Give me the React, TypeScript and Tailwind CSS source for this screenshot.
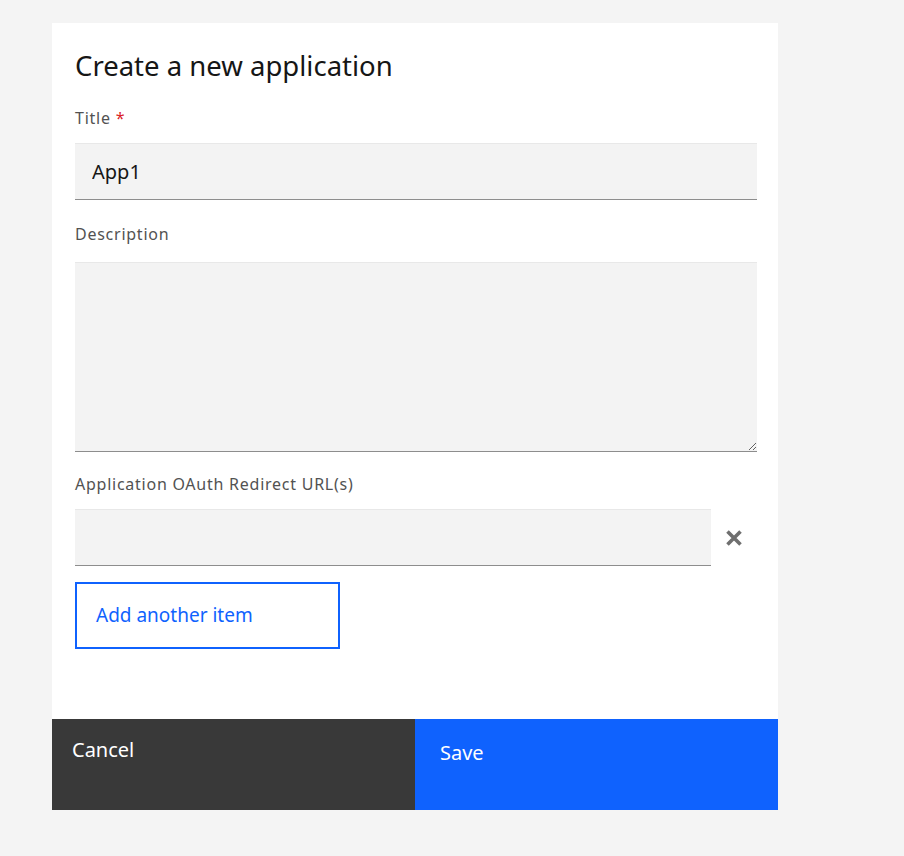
import React from 'react';

const font = { fontFamily: '"Noto Sans", "Liberation Sans", sans-serif' };

function FieldLabel({ children, required }: { children: React.ReactNode; required?: boolean }) {
  return (
    <label className="block text-[16px] leading-[20px] tracking-[0.75px] text-[#525252]">
      {children}
      {required && <span className="ml-[5px] text-[#da1e28]">*</span>}
    </label>
  );
}

export default function App() {
  return (
    <div style={font} className="min-h-[856px] bg-[#f4f4f4] pl-[52px] pt-[23px]">
      <div className="w-[726px] bg-white">
        <div className="h-[696px] pl-[23px] pr-[21px] pt-[25px]">
          <h2 className="text-[27.5px] leading-[36px] text-[#161616]">Create a new application</h2>

          <div className="mt-[24px]">
            <FieldLabel required>Title</FieldLabel>
            <input
              defaultValue="App1"
              className="mt-[15px] block h-[57px] w-full border-t border-t-[#e8e8e8] border-b border-b-[#8d8d8d] bg-[#f3f3f3] px-[17px] text-[20px] text-[#161616] outline-none"
            />
          </div>

          <div className="mt-[24px]">
            <FieldLabel>Description</FieldLabel>
            <textarea className="mt-[18px] block h-[190px] w-full resize-y border-t border-t-[#e8e8e8] border-b border-b-[#8d8d8d] bg-[#f3f3f3] px-[17px] py-[12px] text-[17px] outline-none" />
          </div>

          <div className="mt-[22px]">
            <FieldLabel>Application OAuth Redirect URL(s)</FieldLabel>
            <div className="mt-[15px] flex items-center">
              <input className="block h-[57px] w-[636px] border-t border-t-[#e8e8e8] border-b border-b-[#8d8d8d] bg-[#f3f3f3] px-[17px] text-[19px] outline-none" />
              <button className="ml-[13px] flex h-[20px] w-[20px] items-center justify-center">
                <svg width="18" height="18" viewBox="0 0 18 18">
                  <path d="M2.5 2.5 L15.5 15.5 M15.5 2.5 L2.5 15.5" stroke="#6f6f6f" strokeWidth="3.6" />
                </svg>
              </button>
            </div>
          </div>

          <button className="mt-[16px] flex h-[67px] w-[265px] items-center border-2 border-[#0f62fe] pl-[19px] text-[19px] text-[#0f62fe]">
            Add another item
          </button>
        </div>

        <div className="flex h-[91px]">
          <button className="flex w-1/2 items-start bg-[#393939] pl-[20px] pt-[16px] text-[20px] text-white">Cancel</button>
          <button className="flex w-1/2 items-start bg-[#0f62fe] pl-[25px] pt-[19px] text-[20px] text-white">Save</button>
        </div>
      </div>
    </div>
  );
}
